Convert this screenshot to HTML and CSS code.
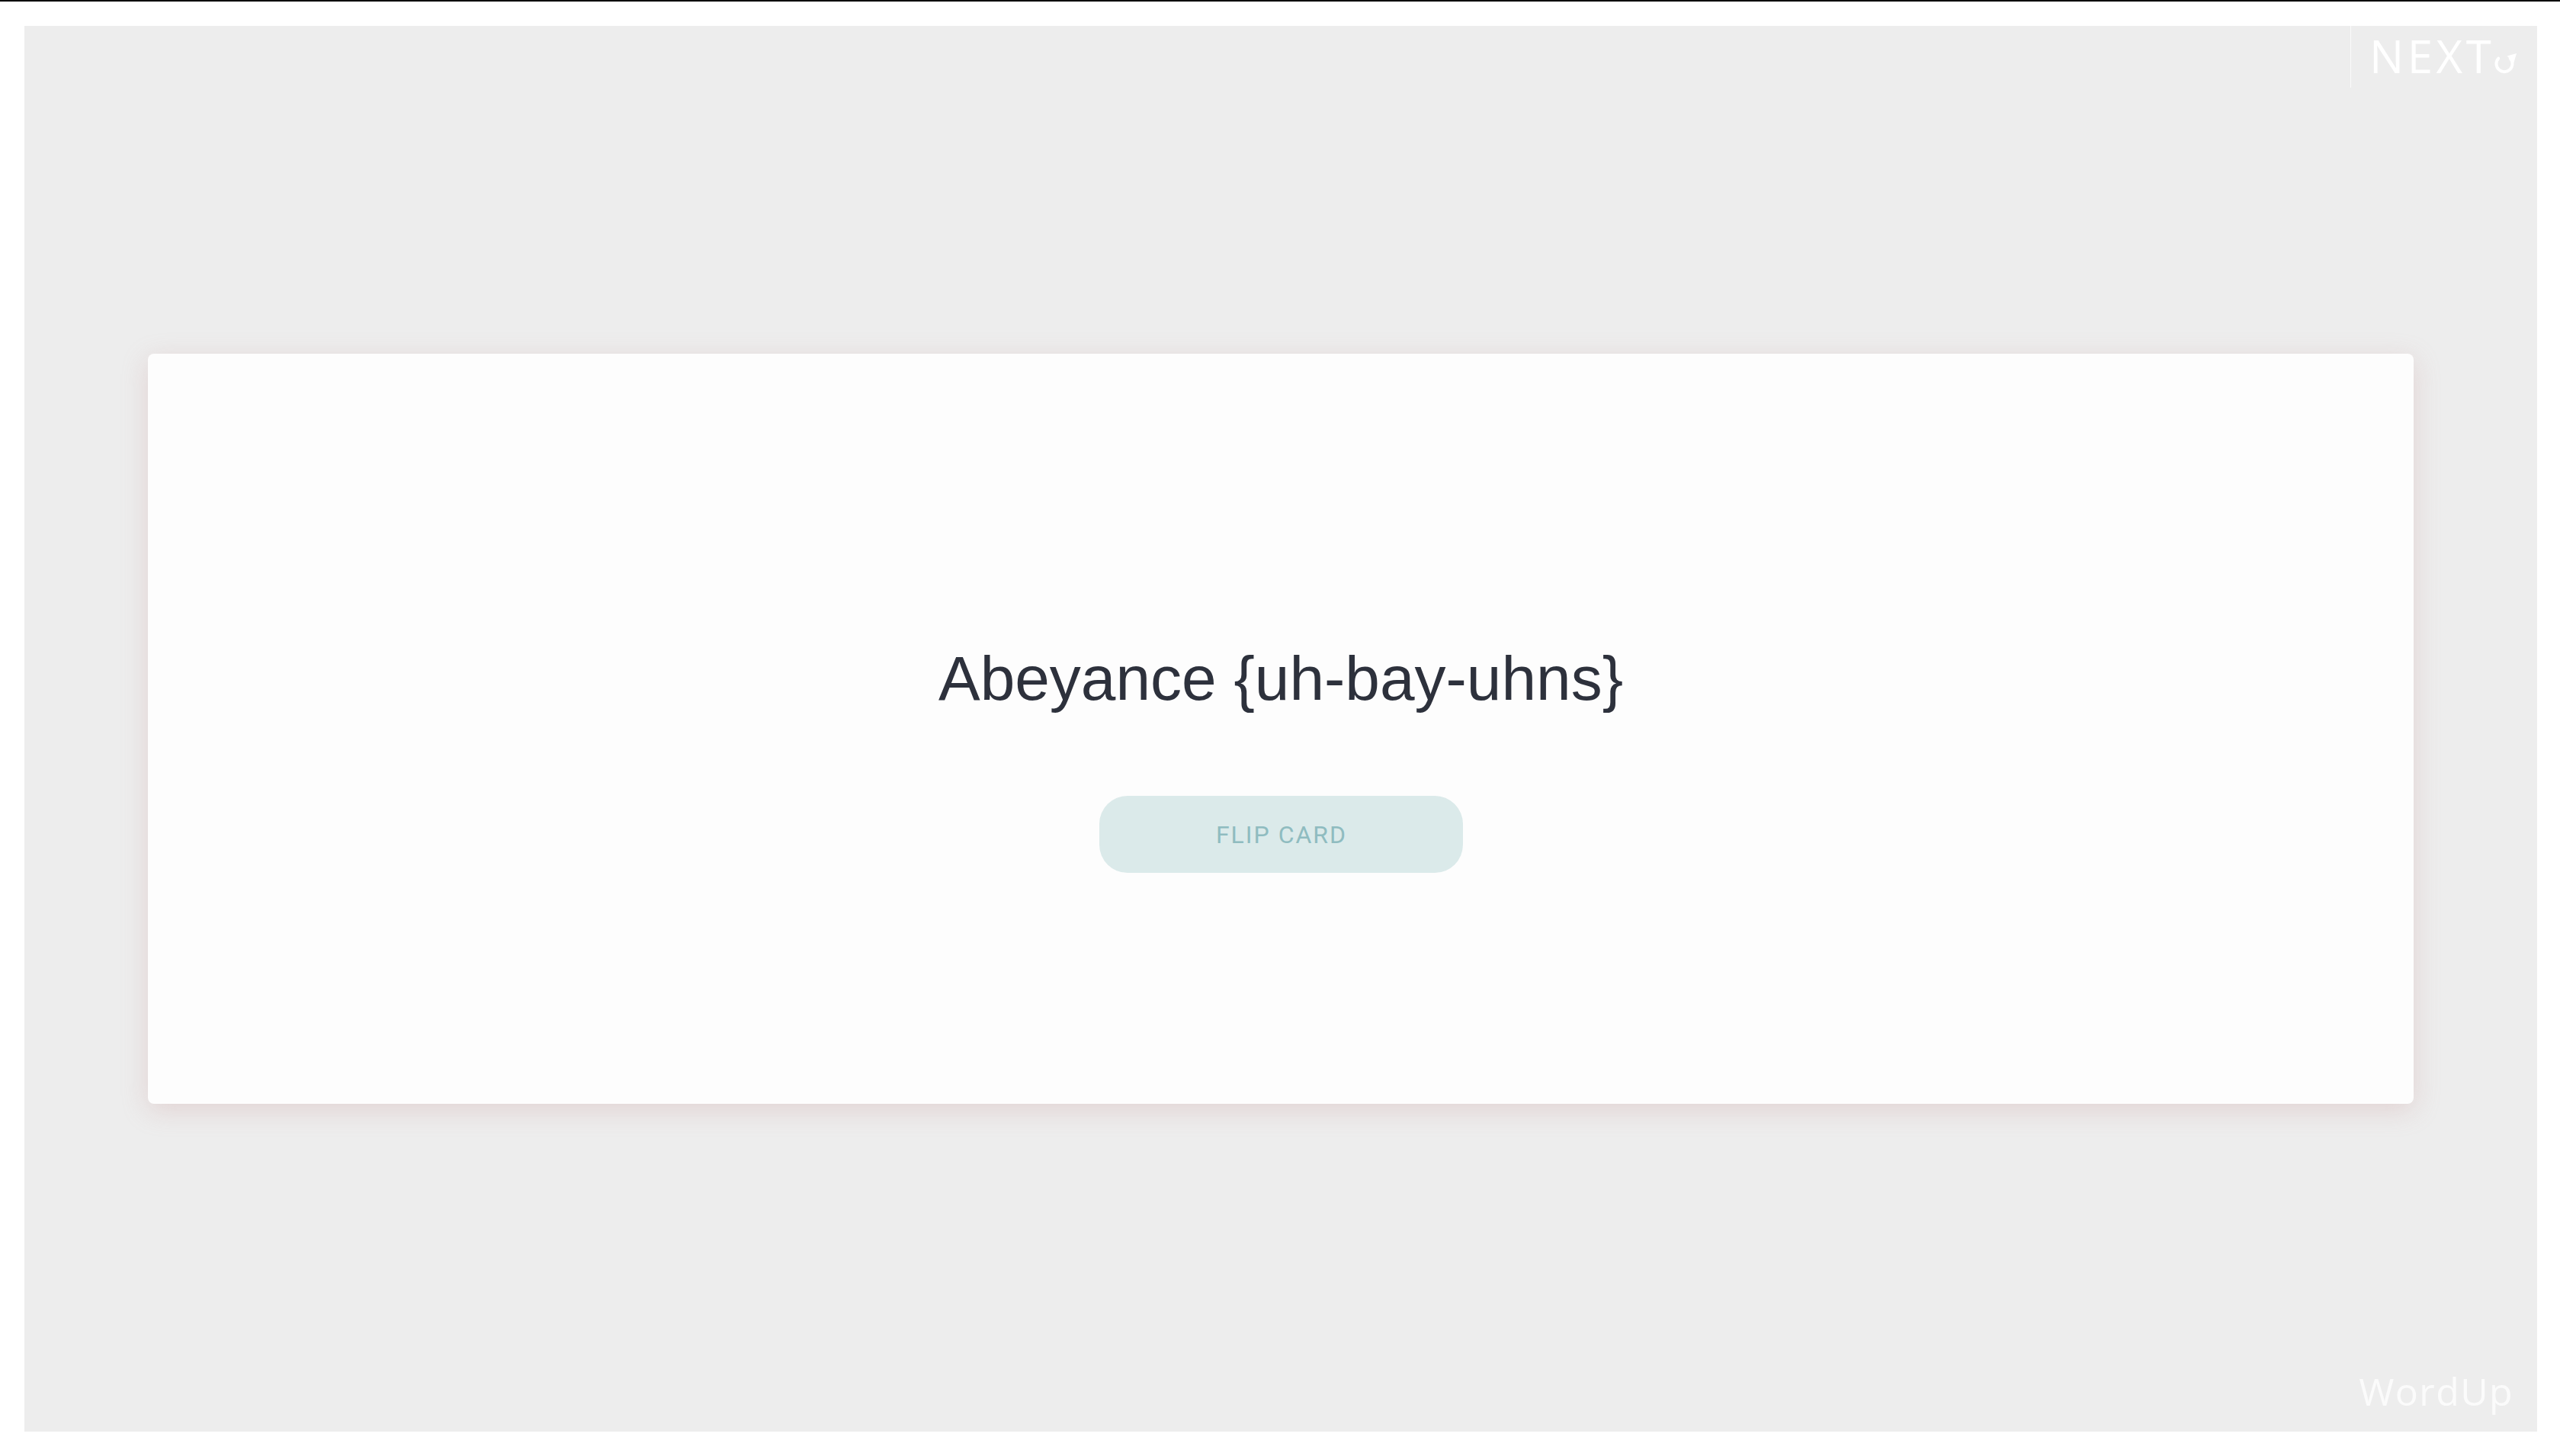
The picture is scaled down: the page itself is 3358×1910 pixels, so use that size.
FILE: index.html
```html
<!DOCTYPE html>
<html lang="en">
<head>
<meta charset="utf-8">
<title>WordUp</title>
<link rel="stylesheet" href="styles.css">
</head>
<body>
<main class="stage">
  <section class="card">
    <h1 class="word">Abeyance {uh-bay-uhns}</h1>
    <button class="flip" type="button">FLIP CARD</button>
  </section>
  <a class="next" href="#">NEXT<svg class="next-icon" width="32" height="28" viewBox="0 0 32 28" aria-hidden="true"><path d="M7.2 7.6 A10.5 10.5 0 1 0 22.8 7.6" fill="none" stroke="#fff" stroke-width="4" stroke-linecap="round"/><polygon points="31,1 18.5,4.5 27.5,13" fill="#fff"/></svg></a>
  <div class="brand">WordUp</div>
</main>
</body>
</html>
```
FILE: styles.css
```css
html, body {
  margin: 0;
  padding: 0;
}
body {
  box-sizing: border-box;
  height: 1910px;
  border-top: 2px solid #000;
  padding: 32px 30px 32px 32px;
  background: #fff;
  font-family: "Liberation Sans", Arial, sans-serif;
}
.stage {
  position: relative;
  height: 1844px;
  background: #ededed;
  display: flex;
  align-items: center;
  justify-content: center;
}
.card {
  box-sizing: border-box;
  width: 2972px;
  height: 984px;
  background: #fdfdfd;
  border-radius: 8px;
  box-shadow: 0 8px 34px rgba(200, 150, 150, 0.3);
  display: flex;
  flex-direction: column;
  align-items: center;
  justify-content: center;
  padding-top: 82px;
}
.word {
  margin: 0;
  font-family: "Liberation Sans", Arial, sans-serif;
  font-weight: 400;
  font-size: 82px;
  line-height: 1;
  color: #2d313c;
}
.flip {
  margin-top: 113px;
  width: 477px;
  height: 101px;
  border: none;
  border-radius: 37px;
  background: #dbeaea;
  color: #8fbcc0;
  font-family: Roboto, "Liberation Sans", sans-serif;
  font-size: 32px;
  letter-spacing: 2px;
  padding: 0 0 0 2px;
  cursor: pointer;
}
.next {
  position: absolute;
  top: 0;
  right: 0;
  box-sizing: border-box;
  width: 245px;
  height: 81px;
  padding-left: 24px;
  border-left: 1px solid rgba(255, 255, 255, 0.75);
  display: flex;
  align-items: flex-start;
  color: #fff;
  text-decoration: none;
  font-family: "Open Sans", sans-serif;
  font-weight: 500;
  font-size: 60px;
  line-height: 78px;
  letter-spacing: 4.5px;
}
.next-icon {
  margin-top: 35px;
  margin-left: -2px;
}
.brand {
  position: absolute;
  right: 31px;
  bottom: 28px;
  font-family: "Open Sans", sans-serif;
  font-weight: 500;
  font-size: 50px;
  line-height: 50px;
  letter-spacing: 1.4px;
  color: #fbfbfb;
}
```
